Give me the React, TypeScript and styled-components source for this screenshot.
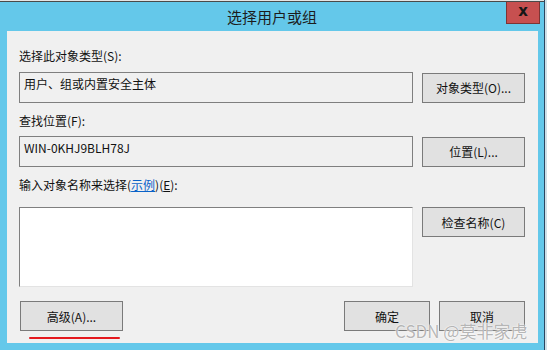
import React from "react";
import styled, { createGlobalStyle } from "styled-components";

const Global = createGlobalStyle`
  html, body { margin: 0; padding: 0; }
  body {
    background: #cfe0e8;
    font-family: "Noto Sans CJK SC", "Noto Sans", sans-serif;
    font-size: 12px;
    color: #111;
  }
`;

const Screen = styled.div`
  position: relative;
  width: 547px;
  height: 350px;
  overflow: hidden;
  background: #cfe0e8;
`;

const Window = styled.div`
  width: 544px;
  height: 350px;
  background: #64c8ea;
  border-right: 1px solid #2b4660;
  display: flex;
  flex-direction: column;
`;

const TopStrip = styled.div`
  height: 1px;
  background: #e4e4e4;
  border-bottom: 1px solid #4a4a4a;
`;

const TitleBar = styled.div`
  height: 29px;
  display: grid;
  grid-template-columns: 1fr auto 1fr;
  align-items: start;
`;

const Title = styled.div`
  grid-column: 2;
  font-size: 15px;
  line-height: 20px;
  padding-top: 5px;
  color: #1c1c1c;
`;

const CloseButton = styled.div`
  grid-column: 3;
  justify-self: end;
  margin-right: 4px;
  width: 32px;
  height: 19px;
  background: #c75050;
  border: 1px solid #7d3434;
  border-top: none;
  display: flex;
  align-items: center;
  justify-content: center;
  font-family: "DejaVu Sans", sans-serif;
  font-weight: bold;
  font-size: 15px;
  line-height: 1;
  color: #161616;
  padding-bottom: 2px;
  box-sizing: content-box;
`;

const Panel = styled.div`
  position: relative;
  margin: 0 6px 0 7px;
  height: 312px;
  box-sizing: border-box;
  background: #f0f0f0;
  padding: 17px 13px 12px 12px;
  display: flex;
  flex-direction: column;
`;

const Label = styled.div<{ $mt?: number; $mb?: number }>`
  line-height: 16px;
  height: 16px;
  margin-top: ${(p) => p.$mt ?? 0}px;
  margin-bottom: ${(p) => p.$mb ?? 0}px;
  white-space: nowrap;
`;

const Link = styled.span`
  color: #0a62c8;
  text-decoration: underline;
`;

const Key = styled.span`
  text-decoration: underline;
`;

const FieldRow = styled.div<{ $align?: string }>`
  display: grid;
  grid-template-columns: 394px 103px;
  column-gap: 9px;
  align-items: ${(p) => p.$align ?? "center"};
`;

const TextBox = styled.div`
  height: 31px;
  box-sizing: border-box;
  border: 1px solid #7f7f7f;
  background: #f0f0f0;
  padding: 3px 4px;
  line-height: 16px;
  white-space: nowrap;
`;

const TextArea = styled.div`
  height: 80px;
  box-sizing: border-box;
  background: #fff;
  border-top: 1px solid #7f7f7f;
  border-left: 1px solid #7f7f7f;
  border-right: 1px solid #e3e3e3;
  border-bottom: 1px solid #e3e3e3;
`;

const Button = styled.div<{ $w?: number }>`
  width: ${(p) => (p.$w ? `${p.$w}px` : "auto")};
  height: 30px;
  box-sizing: border-box;
  background: #e1e1e1;
  border: 1px solid #7a7a7a;
  display: flex;
  align-items: center;
  justify-content: center;
  white-space: nowrap;
  color: #111;
`;

const BottomRow = styled.div`
  margin-top: 14px;
  display: flex;
  align-items: center;
  gap: 9px;
`;

const Spacer = styled.div`
  flex: 1;
`;

const AdvancedButton = styled(Button)`
  margin-left: 1px;
`;

const RedMark = styled.div`
  position: absolute;
  left: 22px;
  top: 306px;
  width: 91px;
  height: 2px;
  background: #e5191e;
  border-radius: 1px;
`;

const Watermark = styled.div`
  position: absolute;
  left: 395px;
  top: 321px;
  font-family: "Noto Sans CJK SC", "Noto Sans", sans-serif;
  font-size: 17px;
  line-height: 20px;
  color: rgba(150, 150, 150, 0.7);
  text-shadow: 0 0 1px #fff, 0 0 2px #fff;
  white-space: nowrap;
  pointer-events: none;
`;

export default function App() {
  return (
    <>
      <Global />
      <Screen>
        <Window>
          <TopStrip />
          <TitleBar>
            <Title>选择用户或组</Title>
            <CloseButton>x</CloseButton>
          </TitleBar>
          <Panel>
            <Label $mb={8}>选择此对象类型(S):</Label>
            <FieldRow>
              <TextBox>用户、组或内置安全主体</TextBox>
              <Button>对象类型(O)...</Button>
            </FieldRow>

            <Label $mt={10} $mb={7}>查找位置(F):</Label>
            <FieldRow>
              <TextBox>WIN-0KHJ9BLH78J</TextBox>
              <Button>位置(L)...</Button>
            </FieldRow>

            <Label $mt={10} $mb={14}>
              输入对象名称来选择(<Link>示例</Link>)(<Key>E</Key>):
            </Label>
            <FieldRow $align="start">
              <TextArea />
              <Button>检查名称(C)</Button>
            </FieldRow>

            <BottomRow>
              <AdvancedButton $w={103}>高级(A)...</AdvancedButton>
              <Spacer />
              <Button $w={86}>确定</Button>
              <Button $w={86}>取消</Button>
            </BottomRow>
            <RedMark />
          </Panel>
        </Window>
        <Watermark>CSDN @莫非家虎</Watermark>
      </Screen>
    </>
  );
}
